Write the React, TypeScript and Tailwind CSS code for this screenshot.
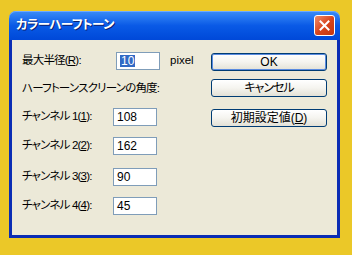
const font = "font-['Liberation_Sans','Noto_Sans_CJK_JP',sans-serif] [font-feature-settings:'palt']";
const jp = 'text-[11.5px] tracking-[-0.8px]';

function XpButton({ children, primary }: { children: React.ReactNode; primary?: boolean }) {
  return (
    <button
      className={`flex h-[18px] w-[116px] items-center justify-center rounded-[3px] border border-[#003C74] bg-gradient-to-b from-white via-[#F5F4EF] to-[#E3E1D6] text-[12px] leading-none text-black ${
        primary ? 'shadow-[inset_0_0_0_1px_#5A8BE0]' : ''
      }`}
    >
      {children}
    </button>
  );
}

function Field({ value, selected }: { value: string; selected?: boolean }) {
  return (
    <div className="flex h-[18px] w-[44px] items-center border border-[#7F9DB9] bg-white pl-[3px] text-[12px] leading-none text-black">
      {selected ? <span className="bg-[#316AC5] px-[1px] text-white">{value}</span> : value}
    </div>
  );
}

const channels = [
  { n: '1', v: '108', mt: 'mt-[10px]' },
  { n: '2', v: '162', mt: 'mt-[11px]' },
  { n: '3', v: '90', mt: 'mt-[13px]' },
  { n: '4', v: '45', mt: 'mt-[11px]' }
];

export default function App() {
  return (
    <div className={`h-[255px] w-[352px] overflow-hidden bg-[#EBC828] pl-[9px] pt-[11px] ${font}`}>
      <div className="flex h-[227px] w-[331px] flex-col">
        {/* title bar */}
        <div className="flex h-[29px] items-center justify-between rounded-t-[7px] bg-gradient-to-b from-[#3A8CF8] via-[#0A5AE6] to-[#0048D8] pl-[7px] pr-[5px] shadow-[inset_0_1px_0_#6FAAFF]">
          <span className="text-[12.5px] font-bold tracking-[-0.5px] text-white [text-shadow:1px_1px_#0A2170]">カラーハーフトーン</span>
          <div className="flex h-[21px] w-[21px] items-center justify-center rounded-[3px] border border-white bg-gradient-to-br from-[#EE8A66] via-[#D9451C] to-[#C2360E]">
            <svg width="11" height="11" viewBox="0 0 11 11">
              <path d="M1.5 1.5 L9.5 9.5 M9.5 1.5 L1.5 9.5" stroke="white" strokeWidth="2" strokeLinecap="square" />
            </svg>
          </div>
        </div>

        {/* body */}
        <div className="flex flex-1 border-x-[3px] border-b-[3px] border-[#0B2DB4] bg-[#ECE9D8] text-[12px] text-black">
          <div className="flex flex-1 flex-col pl-[10px] pt-[12px]">
            <div className="flex h-[18px] items-center">
              <span className={`w-[94px] ${jp}`}>
                最大半径(<span className="underline">R</span>):
              </span>
              <Field value="10" selected />
              <span className="ml-[10px] text-[11.5px]">pixel</span>
            </div>
            <div className={`mt-[10px] flex h-[18px] items-center ${jp}`}>ハーフトーンスクリーンの角度:</div>
            {channels.map((c) => (
              <div key={c.n} className={`${c.mt} flex h-[18px] items-center`}>
                <span className={`w-[91px] ${jp}`}>
                  チャンネル {c.n}(<span className="underline">{c.n}</span>):
                </span>
                <Field value={c.v} />
              </div>
            ))}
          </div>
          <div className="mr-[10px] flex w-[116px] flex-col pt-[13px]">
            <XpButton primary>OK</XpButton>
            <div className="mt-[8px]">
              <XpButton>
                <span className="tracking-[-1px]">キャンセル</span>
              </XpButton>
            </div>
            <div className="mt-[12px]">
              <XpButton>
                初期設定値(<span className="underline">D</span>)
              </XpButton>
            </div>
          </div>
        </div>
      </div>
    </div>
  );
}
